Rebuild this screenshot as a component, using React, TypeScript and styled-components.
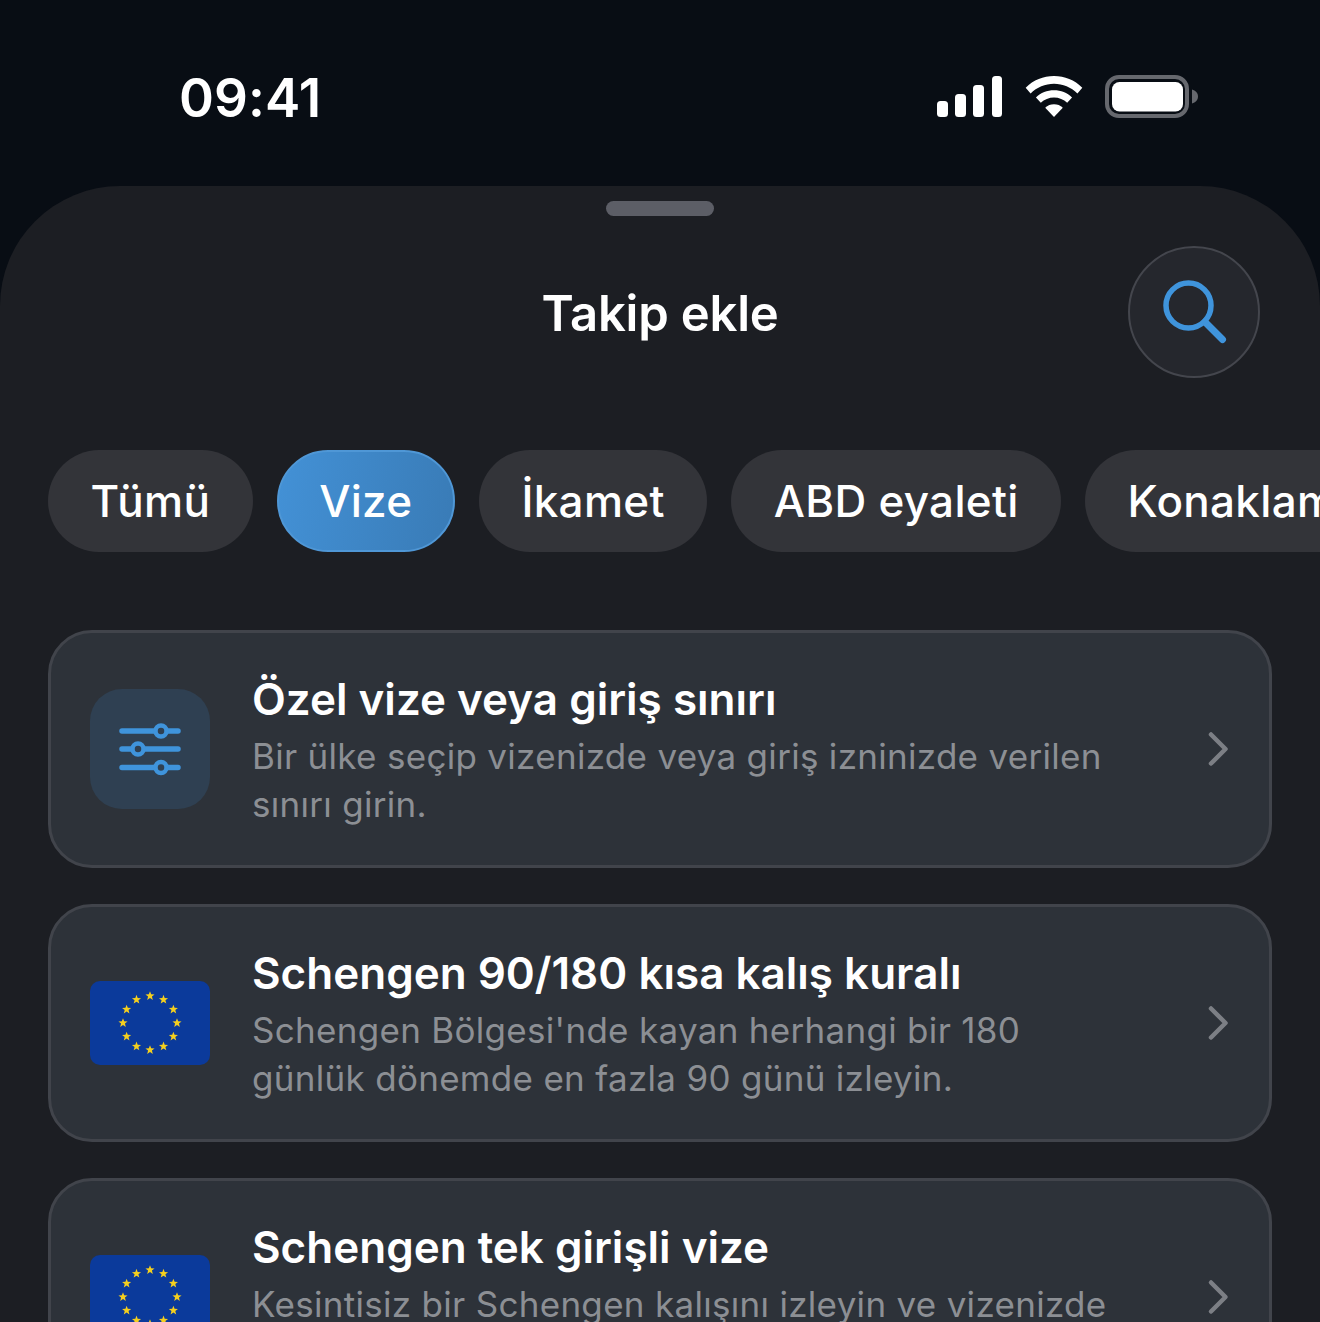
import styled, {createGlobalStyle} from 'styled-components';

const GlobalStyle = createGlobalStyle`
  html, body {
    margin: 0;
    padding: 0;
    background: #080d14;
    overflow: hidden;
  }
  * {
    box-sizing: border-box;
  }
`;

const Screen = styled.div`
  width: 1320px;
  height: 1322px;
  overflow: hidden;
  display: flex;
  flex-direction: column;
  background: #080d14;
  font-family: Inter, "Liberation Sans", sans-serif;
  color: #fff;
`;

const StatusBar = styled.div`
  height: 186px;
  flex: none;
  display: flex;
  align-items: flex-start;
  justify-content: space-between;
  padding: 66px 121px 0 179px;
`;

const Clock = styled.div`
  font-size: 53px;
  font-weight: 600;
  line-height: 64px;
  letter-spacing: 0.1px;
`;

const StatusIcons = styled.div`
  display: flex;
  align-items: center;
  gap: 22px;
  margin-top: 9px;
`;

const Sheet = styled.div`
  flex: 1;
  background: #1c1e23;
  border-radius: 120px 120px 0 0;
  padding-top: 15px;
  overflow: hidden;
`;

const Handle = styled.div`
  width: 108px;
  height: 15px;
  border-radius: 8px;
  background: #5c5e66;
  margin: 0 auto;
`;

const Header = styled.div`
  display: flex;
  align-items: center;
  justify-content: flex-end;
  position: relative;
  margin-top: 30px;
  padding-right: 60px;
`;

const Title = styled.h1`
  position: absolute;
  left: 0;
  right: 0;
  margin: 4px 0 0;
  text-align: center;
  font-size: 49px;
  line-height: 60px;
  font-weight: 600;
  letter-spacing: -0.2px;
`;

const SearchButton = styled.button`
  width: 132px;
  height: 132px;
  padding: 0 0 0 2px;
  border-radius: 50%;
  background: #25272d;
  border: 2px solid #44464d;
  display: flex;
  align-items: center;
  justify-content: center;
`;

const Chips = styled.div`
  display: flex;
  gap: 24px;
  margin-top: 72px;
  padding-left: 48px;
`;

const Chip = styled.div<{$active?: boolean}>`
  flex: none;
  height: 102px;
  padding: 0 ${p => (p.$active ? '40.5px' : '42.5px')};
  border-radius: 51px;
  display: flex;
  align-items: center;
  font-size: 44px;
  font-weight: 500;
  letter-spacing: 0.3px;
  background: ${p => (p.$active ? 'linear-gradient(100deg, #4391d6, #397bb6)' : '#333439')};
  border: ${p => (p.$active ? '2px solid #4f97d6' : 'none')};
`;

const List = styled.div`
  display: flex;
  flex-direction: column;
  gap: 36px;
  margin: 78px 48px 0;
`;

const Card = styled.div`
  flex: none;
  height: 238px;
  display: flex;
  align-items: center;
  padding: 0 40px 0 39px;
  border-radius: 44px;
  background: #2d3239;
  border: 3px solid #41444b;
`;

const IconBox = styled.div`
  width: 120px;
  height: 120px;
  flex: none;
  border-radius: 32px;
  background: #2f4052;
  display: flex;
  align-items: center;
  justify-content: center;
`;

const Flag = styled.svg`
  flex: none;
  display: block;
`;

const CardText = styled.div`
  flex: 1;
  margin-left: 42px;
  min-width: 0;
`;

const CardTitle = styled.div`
  padding-top: 1px;
  font-size: 44px;
  line-height: 54px;
  font-weight: 600;
  letter-spacing: 0;
`;

const CardBody = styled.div`
  margin-top: 6px;
  font-size: 35px;
  line-height: 48px;
  font-weight: 400;
  letter-spacing: 0.3px;
  color: #8c8f94;
  white-space: pre-line;
`;

const Chevron = styled.svg`
  flex: none;
  margin-left: 12px;
`;

const Signal = () => (
    <svg width="66" height="41" viewBox="0 0 66 41" fill="#fff">
        <rect x="0" y="25" width="11" height="16" rx="3.500"/>
        <rect x="18" y="18" width="11" height="23" rx="3.500"/>
        <rect x="36" y="9" width="11" height="32" rx="3.500"/>
        <rect x="55" y="0" width="10" height="41" rx="3.500"/>
    </svg>
);

const Wifi = () => (
    <svg width="58" height="41" viewBox="0 0 58 42" fill="#fff">
        <path d="M29 0c11 0 21 4 29 12l-5 6C46.500 11.500 38 8 29 8S11.500 11.500 5 18l-5-6C8 4 18 0 29 0z"/>
        <path d="M29 14.500c7 0 13.500 2.500 18.500 7.500l-5 5.500C39 24 34 22 29 22s-10 2-13.500 5.500l-5-5.500c5-5 11.500-7.500 18.500-7.500z"/>
        <path d="M29 29c3.500 0 6.500 1.200 9 3.500L29 42l-9-9.500c2.500-2.300 5.500-3.500 9-3.500z"/>
    </svg>
);

const Battery = () => (
    <svg width="94" height="43" viewBox="0 0 94 43">
        <rect x="2" y="2" width="80" height="39" rx="12" fill="none" stroke="#66686e" strokeWidth="4"/>
        <rect x="7" y="7" width="71" height="29.500" rx="7.500" fill="#fff"/>
        <path d="M87 14.500c3.500 1 6 3.500 6 7s-2.500 6-6 7z" fill="#66686e"/>
    </svg>
);

const SearchGlyph = () => (
    <svg width="64" height="64" viewBox="0 0 64 64" fill="none" stroke="#3f94dc" strokeLinecap="round">
        <circle cx="25.500" cy="25.500" r="22.500" strokeWidth="5.500"/>
        <path d="M42 42l17.500 17.500" strokeWidth="7"/>
    </svg>
);

const Sliders = () => (
    <svg width="62" height="54" viewBox="0 0 62 54" fill="none" stroke="#3f94dc" strokeLinecap="round">
        <path d="M3 9h56M3 27h56M3 45.500h56" strokeWidth="5.500"/>
        <circle cx="42" cy="9" r="5.500" fill="#2f4052" strokeWidth="4.500"/>
        <circle cx="19" cy="27" r="5.500" fill="#2f4052" strokeWidth="4.500"/>
        <circle cx="42" cy="45.500" r="5.500" fill="#2f4052" strokeWidth="4.500"/>
    </svg>
);

const starPath = (cx: number, cy: number, r: number) => {
    const points: string[] = [];
    for (let i = 0; i < 10; i++) {
        const radius = i % 2 === 0 ? r : r * 0.42;
        const angle = (Math.PI / 5) * i - Math.PI / 2;
        points.push(`${(cx + radius * Math.cos(angle)).toFixed(2)},${(cy + radius * Math.sin(angle)).toFixed(2)}`);
    }
    return points.join(' ');
};

const EuFlag = () => (
    <Flag width="120" height="84" viewBox="0 0 120 84">
        <rect width="120" height="84" rx="10" fill="#0b3a9b"/>
        {Array.from({length: 12}).map((_, i) => {
            const angle = (Math.PI / 6) * i;
            return (
                <polygon
                    key={i}
                    points={starPath(60 + 27 * Math.sin(angle), 42 - 27 * Math.cos(angle), 4.800)}
                    fill="#f4cf1f"
                />
            );
        })}
    </Flag>
);

const chips = ['Tümü', 'Vize', 'İkamet', 'ABD eyaleti', 'Konaklama'];

const cards = [
    {
        title: 'Özel vize veya giriş sınırı',
        body: 'Bir ülke seçip vizenizde veya giriş izninizde verilen\nsınırı girin.',
        custom: true,
    },
    {
        title: 'Schengen 90/180 kısa kalış kuralı',
        body: "Schengen Bölgesi'nde kayan herhangi bir 180\ngünlük dönemde en fazla 90 günü izleyin.",
    },
    {
        title: 'Schengen tek girişli vize',
        body: 'Kesintisiz bir Schengen kalışını izleyin ve vizenizde\nverilen gün sayısını girin.',
    },
];

const App = () => {
    return (
        <Screen>
            <GlobalStyle/>
            <StatusBar>
                <Clock>09:41</Clock>
                <StatusIcons>
                    <Signal/>
                    <Wifi/>
                    <Battery/>
                </StatusIcons>
            </StatusBar>
            <Sheet>
                <Handle/>
                <Header>
                    <Title>Takip ekle</Title>
                    <SearchButton>
                        <SearchGlyph/>
                    </SearchButton>
                </Header>
                <Chips>
                    {chips.map(chip => (
                        <Chip key={chip} $active={chip === 'Vize'}>{chip}</Chip>
                    ))}
                </Chips>
                <List>
                    {cards.map(card => (
                        <Card key={card.title}>
                            {card.custom ? <IconBox><Sliders/></IconBox> : <EuFlag/>}
                            <CardText>
                                <CardTitle>{card.title}</CardTitle>
                                <CardBody>{card.body}</CardBody>
                            </CardText>
                            <Chevron width="22" height="36" viewBox="0 0 22 36" fill="none" stroke="#7c7f85" strokeWidth="4.500" strokeLinecap="round" strokeLinejoin="round">
                                <path d="M4 3.500l14.500 14.500L4 32.500"/>
                            </Chevron>
                        </Card>
                    ))}
                </List>
            </Sheet>
        </Screen>
    );
};

export default App;
